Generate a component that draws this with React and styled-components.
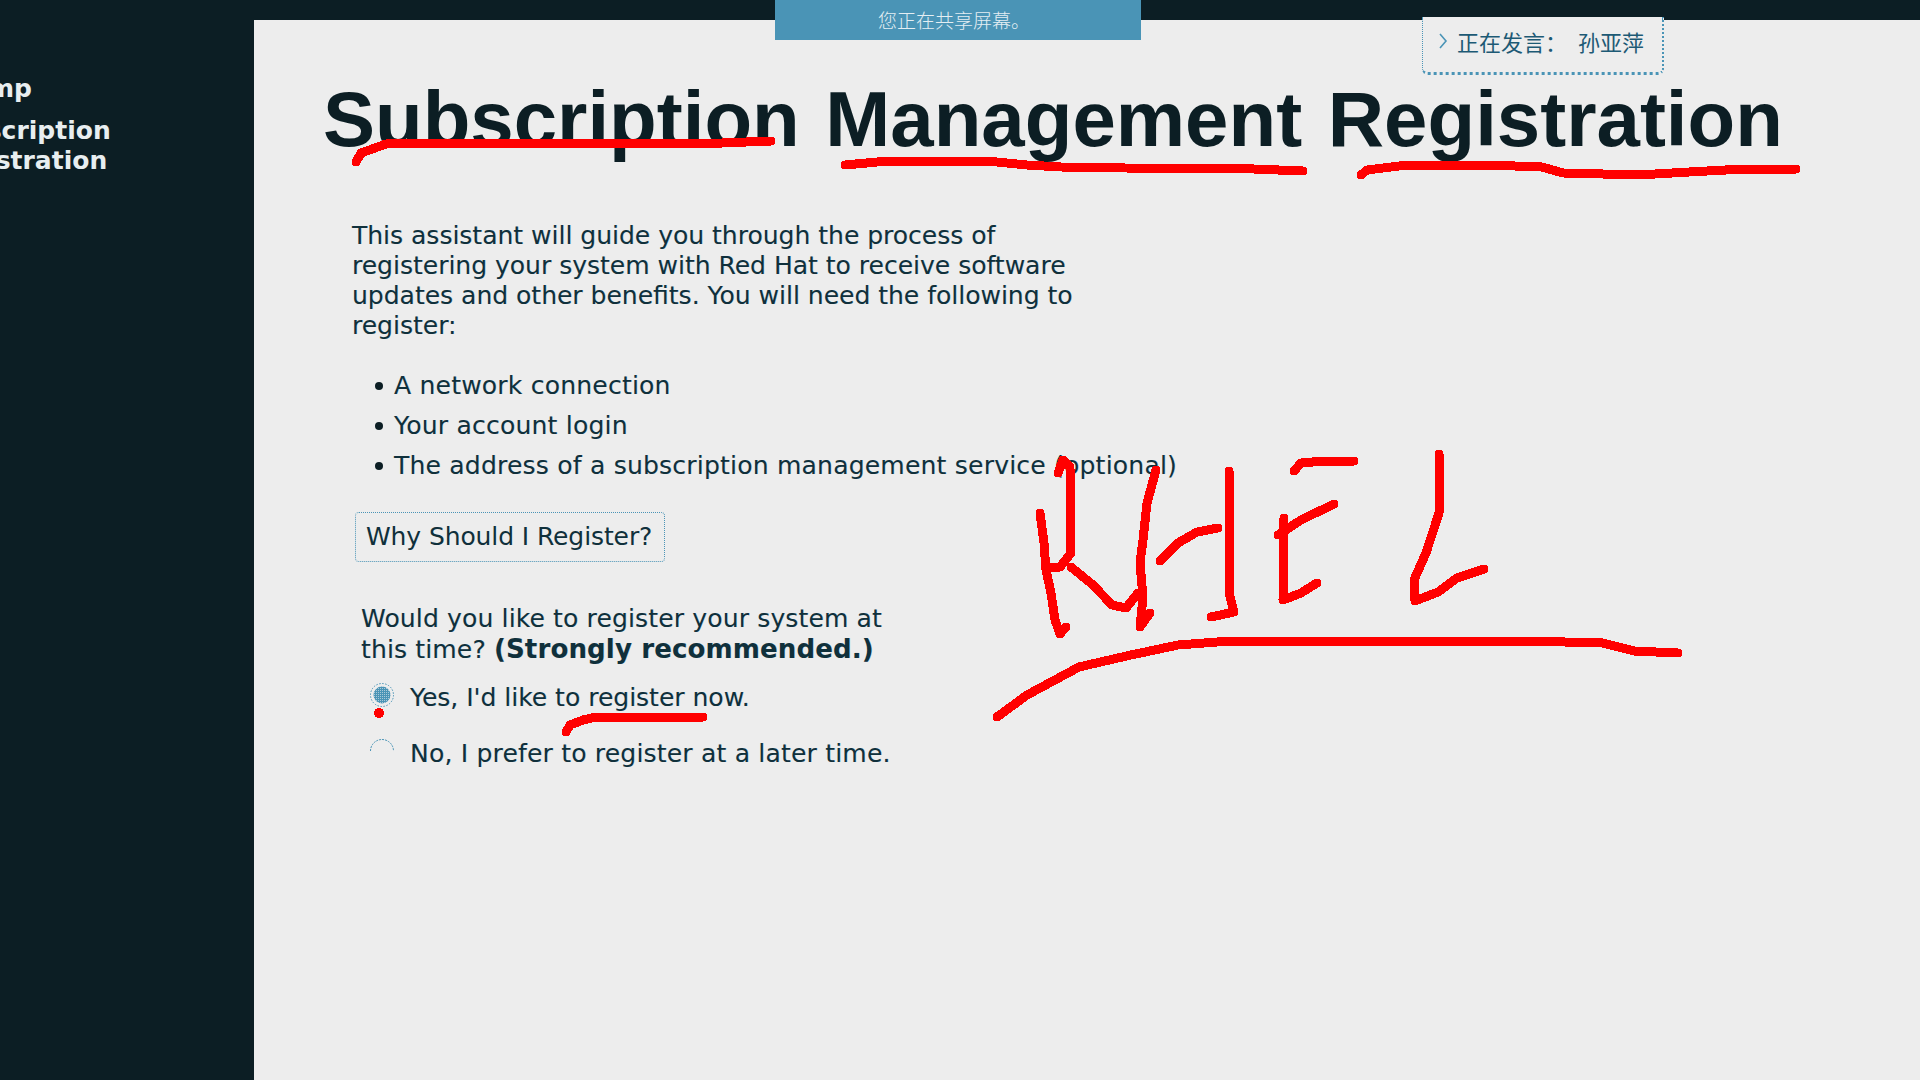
import React from 'react';
import styled, { createGlobalStyle } from 'styled-components';

const GlobalStyle = createGlobalStyle`
  html, body {
    margin: 0;
    padding: 0;
    background: #0c1e24;
  }
`;

const Screen = styled.div`
  position: relative;
  width: 1920px;
  height: 1080px;
  overflow: hidden;
  display: grid;
  grid-template-columns: 254px 1fr;
  grid-template-rows: 20px 1fr;
  background: #0c1e24;
  color: #0c1e24;
  font-family: "DejaVu Sans", sans-serif;
`;

const TopStrip = styled.div`
  grid-column: 1 / 3;
`;

const Sidebar = styled.nav`
  overflow: hidden;
  padding-top: 54px;
  color: #e8eef0;
  font-size: 25px;
  font-weight: bold;
  line-height: 30px;
`;

const SideItem = styled.div`
  margin-left: -67px;
  margin-bottom: ${props => props.$gap || 0}px;
  white-space: nowrap;
`;

const Main = styled.main`
  background: #ededed;
  padding: 55px 0 0 69px;
`;

const Title = styled.h1`
  margin: 0;
  font-family: "Liberation Sans", sans-serif;
  font-size: 78px;
  font-weight: bold;
  line-height: 88px;
  word-spacing: 4px;
  white-space: nowrap;
`;

const Body = styled.div`
  color: #10303b;
  font-size: 25px;
  line-height: 30px;
  padding-left: 29px;
  margin-top: 58px;
  text-shadow: 0.5px 0 0 rgba(74, 148, 182, 0.35);
`;

const Intro = styled.p`
  margin: 0;
  width: 740px;
`;

const Needs = styled.ul`
  list-style: none;
  margin: 25px 0 0;
  padding: 0 0 0 23px;
`;

const Need = styled.li`
  position: relative;
  height: 40px;
  line-height: 40px;
  padding-left: 19px;
  letter-spacing: 0.22px;
  white-space: nowrap;
  &::before {
    content: '';
    position: absolute;
    left: 0;
    top: 16px;
    width: 8px;
    height: 8px;
    border-radius: 50%;
    background: #0c1e24;
  }
`;

const WhyButton = styled.button`
  display: block;
  box-sizing: border-box;
  width: 310px;
  height: 50px;
  margin: 26px 0 0 3px;
  padding: 0 0 0 10px;
  background: none;
  border: 1px dotted #4a94b6;
  border-radius: 4px;
  color: inherit;
  font: inherit;
  letter-spacing: -0.1px;
  text-align: left;
`;

const Question = styled.p`
  margin: 42px 0 0 9px;
  width: 560px;
  letter-spacing: 0.15px;
  b {
    font-size: 26px;
  }
`;

const Options = styled.div`
  margin: 18px 0 0 16px;
  display: flex;
  flex-direction: column;
  gap: 26px;
`;

const Option = styled.label`
  display: flex;
  align-items: center;
  gap: 14px;
  height: 30px;
  letter-spacing: ${props => props.$tracking || 0}px;
  white-space: nowrap;
`;

const RadioMark = styled.svg`
  flex: none;
  margin-bottom: 6px;
`;

const Banner = styled.div`
  position: absolute;
  left: 775px;
  top: 0;
  width: 366px;
  height: 40px;
  background: #4a94b6;
  color: #e4eef3;
  font-family: "Noto Sans CJK SC", sans-serif;
  font-size: 19px;
  font-weight: 300;
  line-height: 39px;
  text-align: center;
  padding-right: 8px;
  box-sizing: border-box;
`;

const Speaker = styled.div`
  position: absolute;
  left: 1422px;
  top: 17px;
  box-sizing: border-box;
  width: 242px;
  height: 58px;
  display: flex;
  align-items: center;
  gap: 9px;
  padding: 0 0 7px 15px;
  background: #ededed;
  border-right: 2px dotted #4a94b6;
  border-bottom: 3px dotted #4a94b6;
  border-left: 1px dotted #4a94b6;
  border-radius: 0 0 6px 6px;
  color: #1d5a75;
  font-family: "Noto Sans CJK SC", sans-serif;
  font-size: 22px;
  word-spacing: 6px;
  white-space: nowrap;
`;

const Ink = styled.svg`
  position: absolute;
  left: 0;
  top: 0;
  pointer-events: none;
`;

const strokes = [
  '356,162 361,153 386,144 404,143 722,143 771,141',
  '845,165 888,161 960,161 997,162 1027,165 1061,167 1125,168 1254,169 1303,171',
  '1361,175 1367,170 1407,165 1487,165 1542,167 1563,173 1603,174 1655,174 1689,172 1744,169 1796,169',
  '566,732 570,725 583,720 596,717 703,717',
  '1040,513 1044,543 1046,570 1051,593 1055,620 1060,634 1066,627',
  '1058,473 1063,460 1070,467 1071,553 1060,567 1046,567',
  '1071,567 1093,585 1112,605 1126,608 1138,593',
  '1156,470 1147,503 1143,540 1140,563 1143,597 1140,627 1150,613',
  '1160,561 1178,543 1197,532 1218,528',
  '1229,471 1229,593 1234,612 1211,617',
  '1294,471 1301,463 1324,461 1354,461',
  '1278,535 1301,520 1334,504',
  '1284,518 1283,600 1301,593 1317,583',
  '1439,454 1439,513 1426,553 1414,580 1415,601 1438,592 1457,578 1484,569',
  '997,717 1027,695 1079,667 1131,655 1178,645 1230,641 1527,641 1603,643 1634,651 1678,653',
];

const Radio = ({ checked }) => (
  <RadioMark width="28" height="26" viewBox="0 0 28 26">
    {checked ? (
      <>
        <defs>
          <pattern id="dither" width="2" height="2" patternUnits="userSpaceOnUse">
            <rect width="2" height="2" fill="#4a94b6" />
            <rect width="1" height="1" fill="#a9c9d8" />
          </pattern>
        </defs>
        <circle cx="14" cy="13" r="11.5" fill="none" stroke="#4a94b6" strokeWidth="1" strokeDasharray="1.5 1.5" />
        <circle cx="14" cy="13" r="8.5" fill="url(#dither)" />
      </>
    ) : (
      <path d="M2.5 13 A11.5 11.5 0 0 1 25.5 13" fill="none" stroke="#4a94b6" strokeWidth="1" strokeDasharray="2 1" />
    )}
  </RadioMark>
);

export default function App() {
  return (
    <Screen>
      <GlobalStyle />
      <TopStrip />
      <Sidebar>
        <SideItem $gap={12}>Kdump</SideItem>
        <SideItem>Subscription</SideItem>
        <SideItem>Registration</SideItem>
      </Sidebar>
      <Main>
        <Title>Subscription Management Registration</Title>
        <Body>
          <Intro>
            This assistant will guide you through the process of registering your system with Red Hat to receive software updates and other benefits. You will need the following to register:
          </Intro>
          <Needs>
            <Need>A network connection</Need>
            <Need>Your account login</Need>
            <Need>The address of a subscription management service (optional)</Need>
          </Needs>
          <WhyButton>Why Should I Register?</WhyButton>
          <Question>
            Would you like to register your system at this time? <b>(Strongly recommended.)</b>
          </Question>
          <Options>
            <Option><Radio checked />Yes, I'd like to register now.</Option>
            <Option $tracking={0.2}><Radio />No, I prefer to register at a later time.</Option>
          </Options>
        </Body>
      </Main>
      <Banner>您正在共享屏幕。</Banner>
      <Speaker>
        <svg width="10" height="18" viewBox="0 0 10 18">
          <path d="M2 2 L8 9 L2 16" fill="none" stroke="#4a94b6" strokeWidth="1.6" />
        </svg>
        正在发言： 孙亚萍
      </Speaker>
      <Ink width="1920" height="1080" viewBox="0 0 1920 1080" shapeRendering="crispEdges">
        {strokes.map(points => (
          <polyline key={points} points={points} fill="none" stroke="#ff0000" strokeWidth="9" strokeLinecap="round" strokeLinejoin="round" />
        ))}
        <circle cx="379" cy="713" r="5" fill="#ff0000" />
      </Ink>
    </Screen>
  );
}
